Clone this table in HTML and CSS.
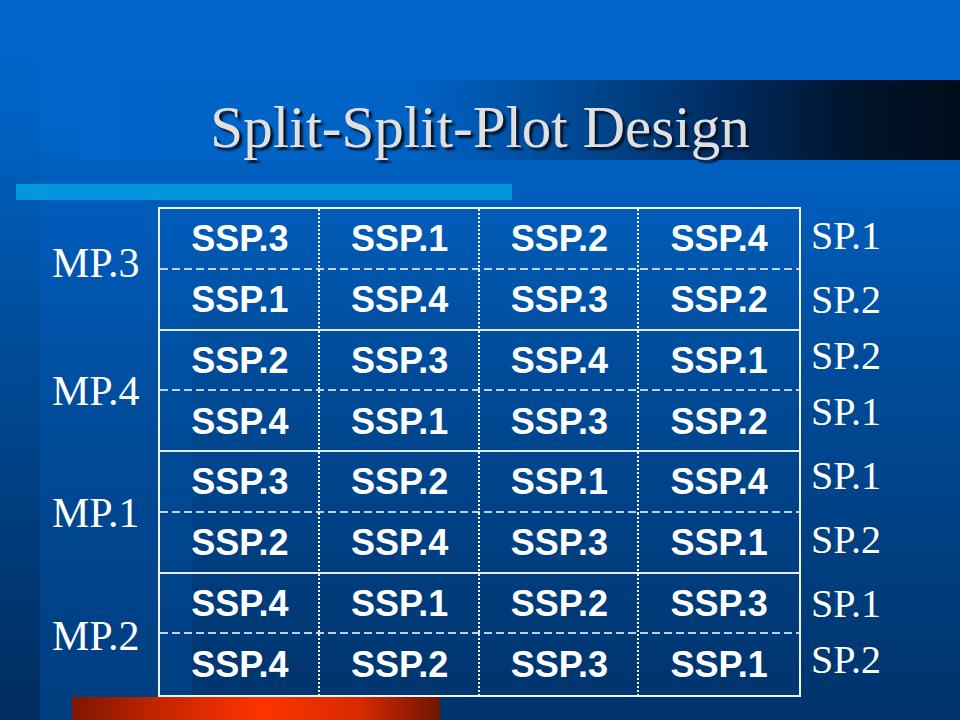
FILE: index.html
```html
<!DOCTYPE html>
<html lang="en">
<head>
<meta charset="utf-8">
<title>Split-Split-Plot Design</title>
<link rel="stylesheet" href="styles.css">
</head>
<body>
<div class="slide">
  <header class="title-band">
    <h1 class="title">Split-Split-Plot Design</h1>
  </header>
  <div class="accent-bar"></div>
  <main class="layout">
    <div class="mp-col">
      <div class="mp">MP.3</div>
      <div class="mp">MP.4</div>
      <div class="mp">MP.1</div>
      <div class="mp">MP.2</div>
    </div>
    <div class="plot">
      <div class="row dash"><div class="cell">SSP.3</div><div class="cell">SSP.1</div><div class="cell">SSP.2</div><div class="cell">SSP.4</div></div>
      <div class="row solid"><div class="cell">SSP.1</div><div class="cell">SSP.4</div><div class="cell">SSP.3</div><div class="cell">SSP.2</div></div>
      <div class="row dash"><div class="cell">SSP.2</div><div class="cell">SSP.3</div><div class="cell">SSP.4</div><div class="cell">SSP.1</div></div>
      <div class="row solid"><div class="cell">SSP.4</div><div class="cell">SSP.1</div><div class="cell">SSP.3</div><div class="cell">SSP.2</div></div>
      <div class="row dash"><div class="cell">SSP.3</div><div class="cell">SSP.2</div><div class="cell">SSP.1</div><div class="cell">SSP.4</div></div>
      <div class="row solid"><div class="cell">SSP.2</div><div class="cell">SSP.4</div><div class="cell">SSP.3</div><div class="cell">SSP.1</div></div>
      <div class="row dash"><div class="cell">SSP.4</div><div class="cell">SSP.1</div><div class="cell">SSP.2</div><div class="cell">SSP.3</div></div>
      <div class="row"><div class="cell">SSP.4</div><div class="cell">SSP.2</div><div class="cell">SSP.3</div><div class="cell">SSP.1</div></div>
    </div>
    <div class="sp-col">
      <div class="sp first">SP.1</div>
      <div class="sp">SP.2</div>
      <div class="sp close">SP.2</div>
      <div class="sp close">SP.1</div>
      <div class="sp">SP.1</div>
      <div class="sp">SP.2</div>
      <div class="sp">SP.1</div>
      <div class="sp close">SP.2</div>
    </div>
  </main>
  <div class="footer-bar"></div>
</div>
</body>
</html>
```
FILE: styles.css
```css
html, body {
  margin: 0;
  padding: 0;
}

body {
  width: 960px;
  height: 720px;
  overflow: hidden;
}

.slide {
  width: 960px;
  height: 720px;
  box-sizing: border-box;
  padding-top: 80px;
  overflow: hidden;
  background:
    linear-gradient(to bottom, #005cbc 0%, #004b98 45%, #003d7e 100%) 40px 200px / 152px 520px no-repeat,
    linear-gradient(to bottom, #0066cc 0%, #0062c4 15%, #004a96 50%, #002c5e 100%) 0 0 / 40px 720px no-repeat,
    linear-gradient(to bottom, #0066cc 0%, #0064c8 18%, #004c9a 50%, #00336a 100%);
}

.title-band {
  margin-left: 80px;
  height: 80px;
  box-sizing: border-box;
  padding: 14px 80px 0 0;
  background: linear-gradient(to right, #0064c8 0%, #0062c4 38%, #00468e 58%, #00285a 75%, #00142c 88%, #000c1a 100%);
}

.title {
  margin: 0;
  font-family: "Liberation Serif", "Times New Roman", serif;
  font-weight: normal;
  font-size: 59px;
  line-height: 66px;
  text-align: center;
  color: #e0e0e0;
  text-shadow: 3px 3px 2px #06152b;
  white-space: nowrap;
}

.accent-bar {
  margin: 24px 0 0 16px;
  width: 496px;
  height: 16px;
  background: #0097dd;
}

.layout {
  display: flex;
  margin-top: 7px;
}

.mp-col {
  width: 158px;
  box-sizing: border-box;
  padding: 0 0 0 52px;
  display: grid;
  grid-template-rows: repeat(4, 1fr);
  align-items: center;
}

.mp {
  font-family: "Liberation Serif", "Times New Roman", serif;
  font-size: 42px;
  line-height: 1;
  color: #ffffff;
}

.mp:first-child {
  margin-bottom: 10px;
}

.plot {
  width: 643px;
  box-sizing: border-box;
  border: 2px solid #eef3fa;
}

.row {
  display: grid;
  grid-template-columns: repeat(4, 1fr);
  height: 60.75px;
}

.row.dash {
  background: repeating-linear-gradient(to right, #bcd3ee 0 8px, transparent 8px 12px) left bottom / 100% 2px no-repeat;
}

.row.solid {
  background: linear-gradient(#e4ecf7, #e4ecf7) left bottom / 100% 2px no-repeat;
}

.cell {
  display: flex;
  align-items: center;
  justify-content: center;
  font-family: "Liberation Sans", Arial, sans-serif;
  font-weight: bold;
  font-size: 36px;
  color: #ffffff;
}

.cell:not(:last-child) {
  background: repeating-linear-gradient(to bottom, #ffffff 0 2px, transparent 2px 4px) right top / 2px 100% no-repeat;
}

.sp-col {
  display: flex;
  flex-direction: column;
  padding-left: 10px;
}

.sp {
  font-family: "Liberation Serif", "Times New Roman", serif;
  font-size: 40px;
  line-height: 38px;
  height: 38px;
  color: #ffffff;
  margin-top: 26px;
}

.sp.first {
  margin-top: 10px;
}

.sp.close {
  margin-top: 18px;
}

.footer-bar {
  margin-left: 72px;
  width: 368px;
  height: 23px;
  background: linear-gradient(to right, #7e1600 0%, #c82600 25%, #ff3300 52%, #d82a00 78%, #6e1500 100%);
}
```
